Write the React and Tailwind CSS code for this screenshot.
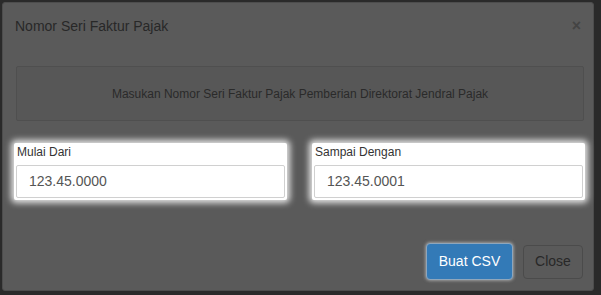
import React from 'react';

const font = { fontFamily: '"Liberation Sans", Arial, sans-serif' };

const Field = ({ label, value }) => (
  <div className="w-[273px] h-[57px] bg-white rounded-[2px] shadow-[0_0_6px_3px_rgba(255,255,255,0.85)] px-[2px]">
    <div className="h-[22px] text-[12px] leading-[16px] text-[#333] pl-[1px] pt-[1px]">{label}</div>
    <div className="h-[33px] border border-[#d0d0d0] rounded-[2px] flex items-center px-[12px] text-[14px] text-[#555]">
      {value}
    </div>
  </div>
);

const App = () => {
  return (
    <div className="w-[601px] h-[295px] bg-[#2a2a2a] overflow-hidden" style={font}>
      <div className="ml-[2px] mt-[2px] w-[592px] h-[289px] bg-[#5a5a5a] border border-[#4d4d4d] rounded-[3px] flex flex-col">
        {/* Header */}
        <div className="h-[44px] flex items-center justify-between pl-[12px] pr-[12px]">
          <span className="text-[14px] text-[#282828] mt-[2px]">Nomor Seri Faktur Pajak</span>
          <span className="text-[16px] font-bold text-[#444] leading-none mt-[2px]">×</span>
        </div>

        {/* Well */}
        <div className="ml-[13px] mr-[9px] mt-[19px] h-[55px] border border-[#4f4f4f] bg-[#575757] rounded-[2px] flex items-center justify-center">
          <span className="text-[12px] text-[#2a2a2a]">Masukan Nomor Seri Faktur Pajak Pemberian Direktorat Jendral Pajak</span>
        </div>

        {/* Fields */}
        <div className="flex gap-[25px] ml-[11px] mt-[22px]">
          <Field label="Mulai Dari" value="123.45.0000" />
          <Field label="Sampai Dengan" value="123.45.0001" />
        </div>

        {/* Footer */}
        <div className="flex justify-end items-center gap-[10px] mr-[10px] mt-[43px]">
          <button className="w-[87px] h-[37px] bg-[#337ab7] border border-[#8fa6bb] rounded-[4px] text-white text-[14px] shadow-[0_0_3px_1px_rgba(200,200,200,0.6)]">
            Buat CSV
          </button>
          <button className="w-[60px] h-[34px] bg-[#5a5a5a] border border-[#4b4b4b] rounded-[4px] text-[#282828] text-[14px]">
            Close
          </button>
        </div>
      </div>
    </div>
  );
};

export default App;
